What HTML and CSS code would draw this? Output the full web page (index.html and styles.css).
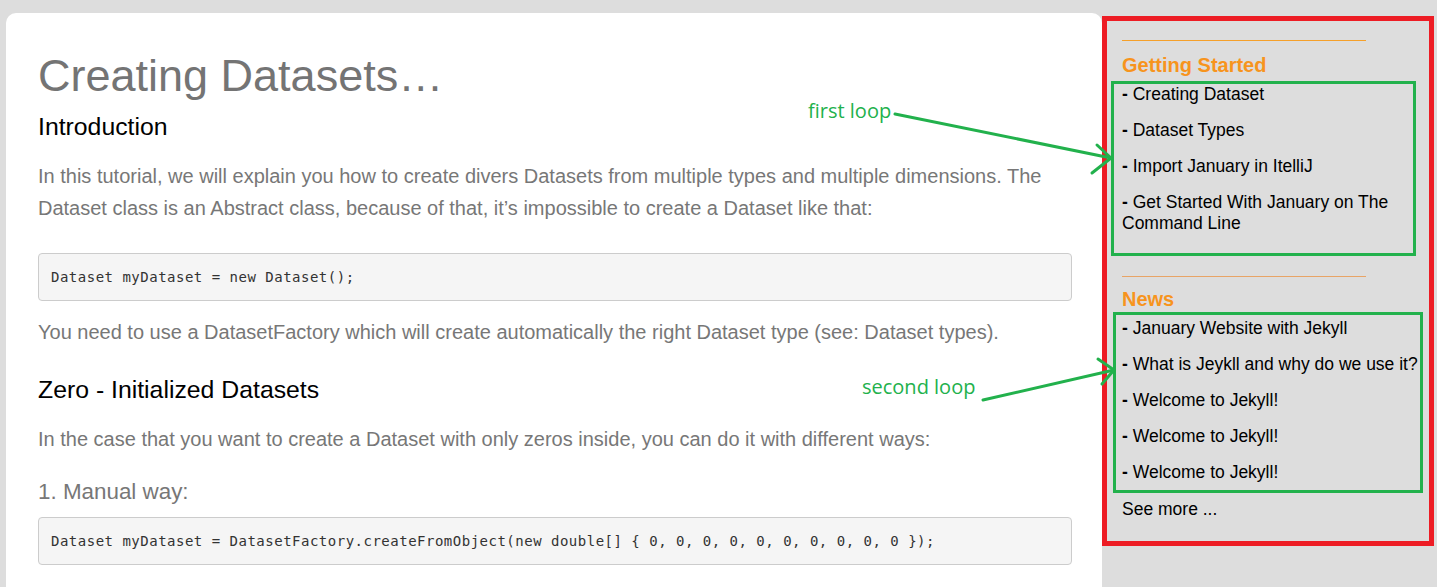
FILE: index.html
```html
<!DOCTYPE html>
<html lang="en">
<head>
<meta charset="utf-8">
<title>Creating Datasets</title>
<link rel="stylesheet" href="styles.css">
</head>
<body>
<div class="page">
  <main class="card">
    <h1 class="title">Creating Datasets…</h1>
    <h2 class="section">Introduction</h2>
    <p class="text">In this tutorial, we will explain you how to create divers Datasets from multiple types and multiple dimensions. The Dataset class is an Abstract class, because of that, it’s impossible to create a Dataset like that:</p>
    <pre class="code code-first">Dataset myDataset = new Dataset();</pre>
    <p class="text text-after-code">You need to use a DatasetFactory which will create automatically the right Dataset type (see: Dataset types).</p>
    <h2 class="section section-spaced">Zero - Initialized Datasets</h2>
    <p class="text">In the case that you want to create a Dataset with only zeros inside, you can do it with different ways:</p>
    <h3 class="subsection">1. Manual way:</h3>
    <pre class="code code-second">Dataset myDataset = DatasetFactory.createFromObject(new double[] { 0, 0, 0, 0, 0, 0, 0, 0, 0, 0 });</pre>
  </main>
  <aside class="sidebar">
    <hr class="rule rule-first">
    <h3 class="side-title side-title-first">Getting Started</h3>
    <ul class="loop loop-first">
      <li>Creating Dataset</li>
      <li>Dataset Types</li>
      <li>Import January in ItelliJ</li>
      <li>Get Started With January on The Command Line</li>
    </ul>
    <hr class="rule rule-second">
    <h3 class="side-title side-title-second">News</h3>
    <ul class="loop loop-second">
      <li>January Website with Jekyll</li>
      <li>What is Jeykll and why do we use it?</li>
      <li>Welcome to Jekyll!</li>
      <li>Welcome to Jekyll!</li>
      <li>Welcome to Jekyll!</li>
    </ul>
    <div class="see-more">See more ...</div>
  </aside>
</div>
<div class="note note-first">first loop</div>
<div class="note note-second">second loop</div>
<svg class="arrows" width="1437" height="587" viewBox="0 0 1437 587" xmlns="http://www.w3.org/2000/svg">
  <g fill="none" stroke="#22b14c" stroke-width="3" stroke-linecap="round" stroke-linejoin="round">
    <path d="M895 114 L1111 158"/>
    <path d="M1097 145 L1111 158 L1092 173"/>
    <path d="M983 400 L1114 370"/>
    <path d="M1098 359 L1114 370 L1102 384"/>
  </g>
</svg>
</body>
</html>
```

FILE: styles.css
```css
* { box-sizing: border-box; }

html, body {
  margin: 0;
  padding: 0;
  width: 1437px;
  height: 587px;
  overflow: hidden;
  background: #dddddd;
  font-family: "Liberation Sans", Arial, sans-serif;
}

.page {
  display: flex;
  align-items: flex-start;
}

.card {
  width: 1096px;
  height: 574px;
  margin: 13px 0 0 6px;
  padding: 37px 30px 0 32px;
  background: #ffffff;
  border-radius: 10px 10px 0 0;
  overflow: hidden;
}

.title {
  margin: 0;
  font-size: 45px;
  line-height: 52px;
  font-weight: normal;
  color: #747474;
}

.section {
  margin: 11px 0 0;
  font-size: 24.8px;
  line-height: 28px;
  font-weight: normal;
  color: #000000;
}

.section-spaced { margin-top: 28px; }

.text {
  margin: 19px 0 0;
  font-size: 20px;
  line-height: 32px;
  color: #777777;
}

.text-after-code { margin-top: 15px; }

.subsection {
  margin: 24px 0 0;
  font-size: 22.4px;
  line-height: 26px;
  font-weight: normal;
  color: #777777;
}

.code {
  margin: 0;
  padding: 13px 12px;
  background: #f5f5f5;
  border: 1px solid #cccccc;
  border-radius: 4px;
  font-family: "DejaVu Sans Mono", monospace;
  font-size: 14px;
  letter-spacing: 0.5px;
  line-height: 20px;
  color: #333333;
  white-space: pre;
}

.code-first { margin-top: 29px; }
.code-second { margin-top: 12px; }

.sidebar {
  width: 332px;
  height: 530px;
  margin-top: 16px;
  border: 5px solid #ed1c24;
  background: #dddddd;
  display: flex;
  flex-direction: column;
  align-items: flex-start;
}

.rule {
  width: 244px;
  height: 0;
  margin: 0 0 0 15px;
  border: 0;
  border-top: 1px solid #f5a02a;
}

.rule-first { margin-top: 19px; }
.rule-second { margin-top: 20px; border-top-color: #e8a466; }

.side-title {
  margin: 0 0 0 15px;
  font-size: 20px;
  line-height: 23px;
  font-weight: bold;
  color: #f7941d;
}

.side-title-first { margin-top: 13px; }
.side-title-second { margin-top: 11px; }

.loop {
  list-style: none;
  margin: 0;
  border: 3px solid #22b14c;
  display: flex;
  flex-direction: column;
  gap: 15px;
  font-size: 17.5px;
  line-height: 21px;
  color: #000000;
  align-self: stretch;
}

.loop li::before {
  content: "- ";
  font-weight: bold;
}

.loop-first {
  margin: 4px 13px 0 4px;
  padding: 0 4px 19px 8px;
}

.loop-second {
  margin: 1px 6px 0 6px;
  padding: 3px 0 7px 6px;
  white-space: nowrap;
}

.see-more {
  margin: 6px 0 0 15px;
  font-size: 17.5px;
  line-height: 21px;
  color: #000000;
}

.note {
  position: absolute;
  font-family: "Open Sans", sans-serif;
  font-size: 20px;
  line-height: 24px;
  color: #22b14c;
}

.note-first { left: 808px; top: 99px; }
.note-second { left: 862px; top: 375px; }

.arrows {
  position: absolute;
  left: 0;
  top: 0;
  pointer-events: none;
}
```
